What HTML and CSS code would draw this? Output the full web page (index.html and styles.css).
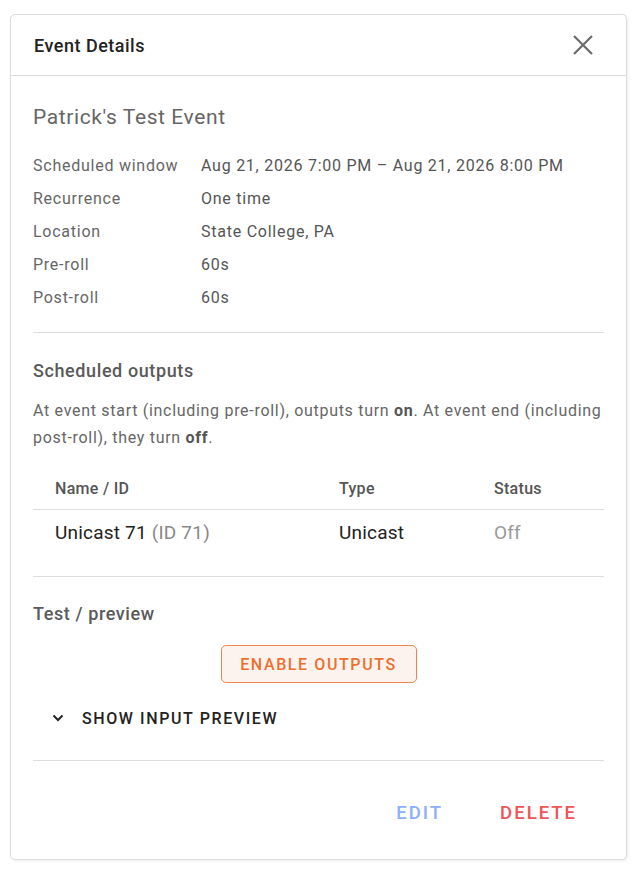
FILE: index.html
```html
<!DOCTYPE html>
<html lang="en">
<head>
  <meta charset="UTF-8" />
  <meta name="viewport" content="width=device-width, initial-scale=1.0" />
  <title>Event Details</title>
  <link rel="stylesheet" href="styles.css">
</head>
<body>
  <div class="card">
    <div class="card-header">
      <h2>Event Details</h2>
      <button class="close" aria-label="Close">
        <svg width="20" height="20" viewBox="0 0 20 20"><path d="M1 1L19 19M19 1L1 19" stroke="#6b6b6b" stroke-width="2.2" fill="none"/></svg>
      </button>
    </div>

    <div class="card-body">
      <h1 class="event-name">Patrick's Test Event</h1>

      <div class="details">
        <div class="label">Scheduled window</div><div class="value">Aug 21, 2026 7:00 PM – Aug 21, 2026 8:00 PM</div>
        <div class="label">Recurrence</div><div class="value">One time</div>
        <div class="label">Location</div><div class="value">State College, PA</div>
        <div class="label">Pre-roll</div><div class="value">60s</div>
        <div class="label">Post-roll</div><div class="value">60s</div>
      </div>

      <hr />

      <h3>Scheduled outputs</h3>
      <p class="note">At event start (including pre-roll), outputs turn <b>on</b>. At event end (including post-roll), they turn <b>off</b>.</p>

      <table class="outputs">
        <thead>
          <tr><th class="col-name">Name / ID</th><th class="col-type">Type</th><th>Status</th></tr>
        </thead>
        <tbody>
          <tr><td>Unicast 71 <span class="muted">(ID 71)</span></td><td>Unicast</td><td class="off">Off</td></tr>
        </tbody>
      </table>

      <hr class="after-table" />

      <h3>Test / preview</h3>
      <div class="center">
        <button class="btn-enable">ENABLE OUTPUTS</button>
      </div>
      <button class="toggle">
        <svg width="12" height="8" viewBox="0 0 12 8"><path d="M1.5 1.5L6 6L10.5 1.5" stroke="#222" stroke-width="2" fill="none"/></svg>
        SHOW INPUT PREVIEW
      </button>

      <hr class="last" />

      <div class="actions">
        <button class="btn-edit">EDIT</button>
        <button class="btn-delete">DELETE</button>
      </div>
    </div>
  </div>
</body>
</html>
```

FILE: styles.css
```css
body {
  font-family: Roboto, 'Noto Sans', sans-serif;
  margin: 0;
  padding: 14px 13px 12px 10px;
  background: #fff;
  color: #555;
}
.card {
  border: 1px solid #ddd;
  border-radius: 5px;
  box-shadow: 1px 1px 3px rgba(0, 0, 0, 0.08);
  background: #fff;
}
.card-header {
  display: flex;
  justify-content: space-between;
  align-items: center;
  height: 60px;
  padding: 0 33px 0 23px;
  border-bottom: 1px solid #ddd;
}
.card-header h2 {
  margin: 0;
  font-size: 18px;
  font-weight: 500;
  letter-spacing: 0.5px;
  color: #222;
}
.close {
  background: none;
  border: none;
  padding: 0;
  width: 20px;
  height: 20px;
  cursor: pointer;
}
.card-body {
  padding: 29px 22px 0 22px;
}
.event-name {
  margin: 0 0 27px;
  font-size: 21px;
  font-weight: 400;
  letter-spacing: 0.6px;
  color: #666;
}
.details {
  display: grid;
  grid-template-columns: 168px 1fr;
  row-gap: 14px;
  font-size: 16px;
  line-height: 19px;
  letter-spacing: 0.75px;
  color: #666;
}
.details .value {
  color: #555;
}
hr {
  border: none;
  border-top: 1px solid #ddd;
  margin: 25px 0 27px;
}
hr.after-table {
  margin-bottom: 26px;
}
h3 {
  margin: 0 0 16px;
  font-size: 18px;
  font-weight: 500;
  letter-spacing: 0.6px;
  color: #5a5a5a;
}
.note {
  margin: 0 0 28px;
  font-size: 16px;
  line-height: 27px;
  letter-spacing: 0.7px;
  color: #666;
}
.note b {
  font-weight: 700;
  color: #555;
}
.outputs {
  width: 100%;
  border-collapse: collapse;
  font-size: 16px;
  letter-spacing: 0.3px;
}
.outputs th {
  text-align: left;
  font-weight: 500;
  color: #555;
  padding: 0 0 11px;
  border-bottom: 1px solid #ddd;
}
.outputs th.col-name, .outputs td:first-child {
  padding-left: 22px;
  width: 284px;
}
.outputs th.col-type {
  width: 155px;
}
.outputs td {
  font-size: 19px;
  line-height: 22px;
  letter-spacing: 0.2px;
  color: #222;
  padding: 12px 0 7px;
}
.outputs .muted {
  color: #888;
}
.outputs .off {
  color: #999;
}
.center {
  display: flex;
  justify-content: center;
  margin-top: 21px;
}
.btn-enable {
  font-family: inherit;
  font-size: 16px;
  font-weight: 500;
  letter-spacing: 1.6px;
  color: #ee6f2d;
  background: #fdf3ee;
  border: 1.5px solid #f2844a;
  border-radius: 5px;
  padding: 0 18px;
  height: 38px;
  width: 196px;
  cursor: pointer;
}
.toggle {
  display: flex;
  align-items: center;
  gap: 18px;
  background: none;
  border: none;
  padding: 0 0 0 19px;
  margin-top: 22px;
  height: 26px;
  font-family: inherit;
  font-size: 16px;
  font-weight: 500;
  letter-spacing: 1.6px;
  color: #222;
  cursor: pointer;
}
hr.last {
  margin: 29px 0 0;
}
.actions {
  display: flex;
  justify-content: flex-end;
  gap: 35px;
  padding: 33px 0 27px;
  margin-right: 16px;
}
.actions button {
  background: none;
  border: none;
  font-family: inherit;
  font-size: 18.5px;
  font-weight: 500;
  letter-spacing: 2px;
  padding: 8px 11px;
  line-height: 22px;
  cursor: pointer;
}
.btn-edit {
  color: #8bb0fb;
}
.btn-delete {
  color: #ef5456;
}
```
